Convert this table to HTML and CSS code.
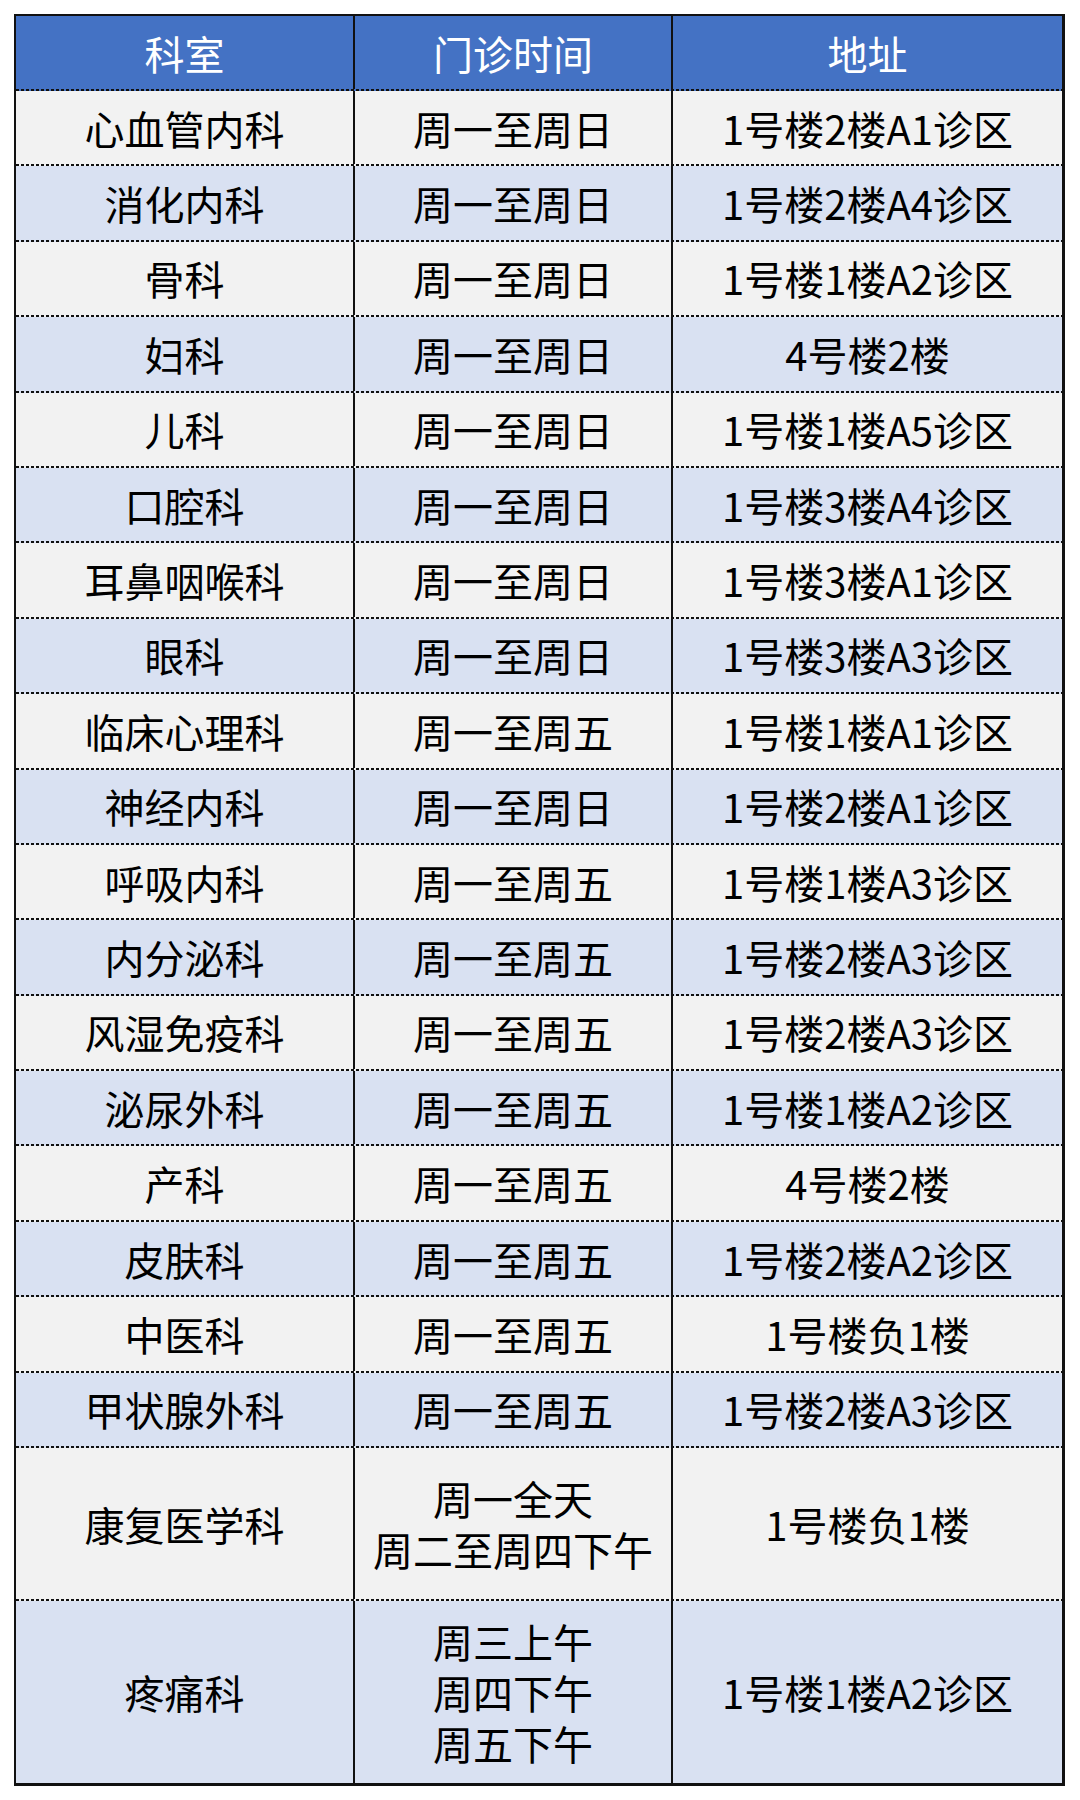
FILE: index.html
```html
<!DOCTYPE html>
<html lang="zh-CN">
<head>
<meta charset="utf-8">
<title>门诊时间</title>
<link rel="stylesheet" href="styles.css">
</head>
<body>
<div class="table">
  <div class="row head"><div class="cell">科室</div><div class="cell">门诊时间</div><div class="cell">地址</div></div>
  <div class="row odd"><div class="cell">心血管内科</div><div class="cell">周一至周日</div><div class="cell">1号楼2楼A1诊区</div></div>
  <div class="row even"><div class="cell">消化内科</div><div class="cell">周一至周日</div><div class="cell">1号楼2楼A4诊区</div></div>
  <div class="row odd"><div class="cell">骨科</div><div class="cell">周一至周日</div><div class="cell">1号楼1楼A2诊区</div></div>
  <div class="row even"><div class="cell">妇科</div><div class="cell">周一至周日</div><div class="cell">4号楼2楼</div></div>
  <div class="row odd"><div class="cell">儿科</div><div class="cell">周一至周日</div><div class="cell">1号楼1楼A5诊区</div></div>
  <div class="row even"><div class="cell">口腔科</div><div class="cell">周一至周日</div><div class="cell">1号楼3楼A4诊区</div></div>
  <div class="row odd"><div class="cell">耳鼻咽喉科</div><div class="cell">周一至周日</div><div class="cell">1号楼3楼A1诊区</div></div>
  <div class="row even"><div class="cell">眼科</div><div class="cell">周一至周日</div><div class="cell">1号楼3楼A3诊区</div></div>
  <div class="row odd"><div class="cell">临床心理科</div><div class="cell">周一至周五</div><div class="cell">1号楼1楼A1诊区</div></div>
  <div class="row even"><div class="cell">神经内科</div><div class="cell">周一至周日</div><div class="cell">1号楼2楼A1诊区</div></div>
  <div class="row odd"><div class="cell">呼吸内科</div><div class="cell">周一至周五</div><div class="cell">1号楼1楼A3诊区</div></div>
  <div class="row even"><div class="cell">内分泌科</div><div class="cell">周一至周五</div><div class="cell">1号楼2楼A3诊区</div></div>
  <div class="row odd"><div class="cell">风湿免疫科</div><div class="cell">周一至周五</div><div class="cell">1号楼2楼A3诊区</div></div>
  <div class="row even"><div class="cell">泌尿外科</div><div class="cell">周一至周五</div><div class="cell">1号楼1楼A2诊区</div></div>
  <div class="row odd"><div class="cell">产科</div><div class="cell">周一至周五</div><div class="cell">4号楼2楼</div></div>
  <div class="row even"><div class="cell">皮肤科</div><div class="cell">周一至周五</div><div class="cell">1号楼2楼A2诊区</div></div>
  <div class="row odd"><div class="cell">中医科</div><div class="cell">周一至周五</div><div class="cell">1号楼负1楼</div></div>
  <div class="row even"><div class="cell">甲状腺外科</div><div class="cell">周一至周五</div><div class="cell">1号楼2楼A3诊区</div></div>
  <div class="row odd tall2"><div class="cell">康复医学科</div><div class="cell multi"><span class="line">周一全天</span><span class="line">周二至周四下午</span></div><div class="cell">1号楼负1楼</div></div>
  <div class="row even tall3 last"><div class="cell">疼痛科</div><div class="cell multi"><span class="line">周三上午</span><span class="line">周四下午</span><span class="line">周五下午</span></div><div class="cell">1号楼1楼A2诊区</div></div>
</div>
</body>
</html>
```

FILE: styles.css
```css
html, body {
  margin: 0;
  padding: 0;
  background: #ffffff;
}

body {
  padding: 14px 0 0 14px;
  font-family: "Noto Sans CJK SC", "Noto Sans", sans-serif;
  color: #000000;
}

.table {
  width: 1051px;
  box-sizing: border-box;
  border-style: solid;
  border-color: #111111;
  border-width: 2px 3px 3px 2px;
  display: flex;
  flex-direction: column;
}

.row {
  --dash: repeating-linear-gradient(90deg, #111111 0 3px, transparent 3px 5px);
  display: grid;
  grid-template-columns: 339px 318px 1fr;
  height: 75.4px;
  box-sizing: border-box;
  padding-bottom: 2px;
  background-repeat: no-repeat;
  background-position: left bottom;
  background-size: 100% 2px;
}

.row.head {
  height: 75px;
  background-image: var(--dash);
  background-color: #4472c4;
  color: #ffffff;
}

.row.odd {
  background-image: var(--dash);
  background-color: #f2f2f2;
}

.row.even {
  background-image: var(--dash);
  background-color: #d9e1f2;
}

.row.tall2 { height: 153.3px; }
.row.tall3 { height: 182px; }
.row.last {
  background-image: none;
  padding-bottom: 0;
}

.cell {
  display: flex;
  align-items: center;
  justify-content: center;
  text-align: center;
  font-size: 40px;
  font-weight: 400;
  line-height: 1.2;
  border-right: 2px solid #111111;
  white-space: nowrap;
}

.cell:last-child { border-right: none; }

.cell.multi {
  flex-direction: column;
}

.line {
  display: block;
  height: 51px;
  line-height: 51px;
}
```
